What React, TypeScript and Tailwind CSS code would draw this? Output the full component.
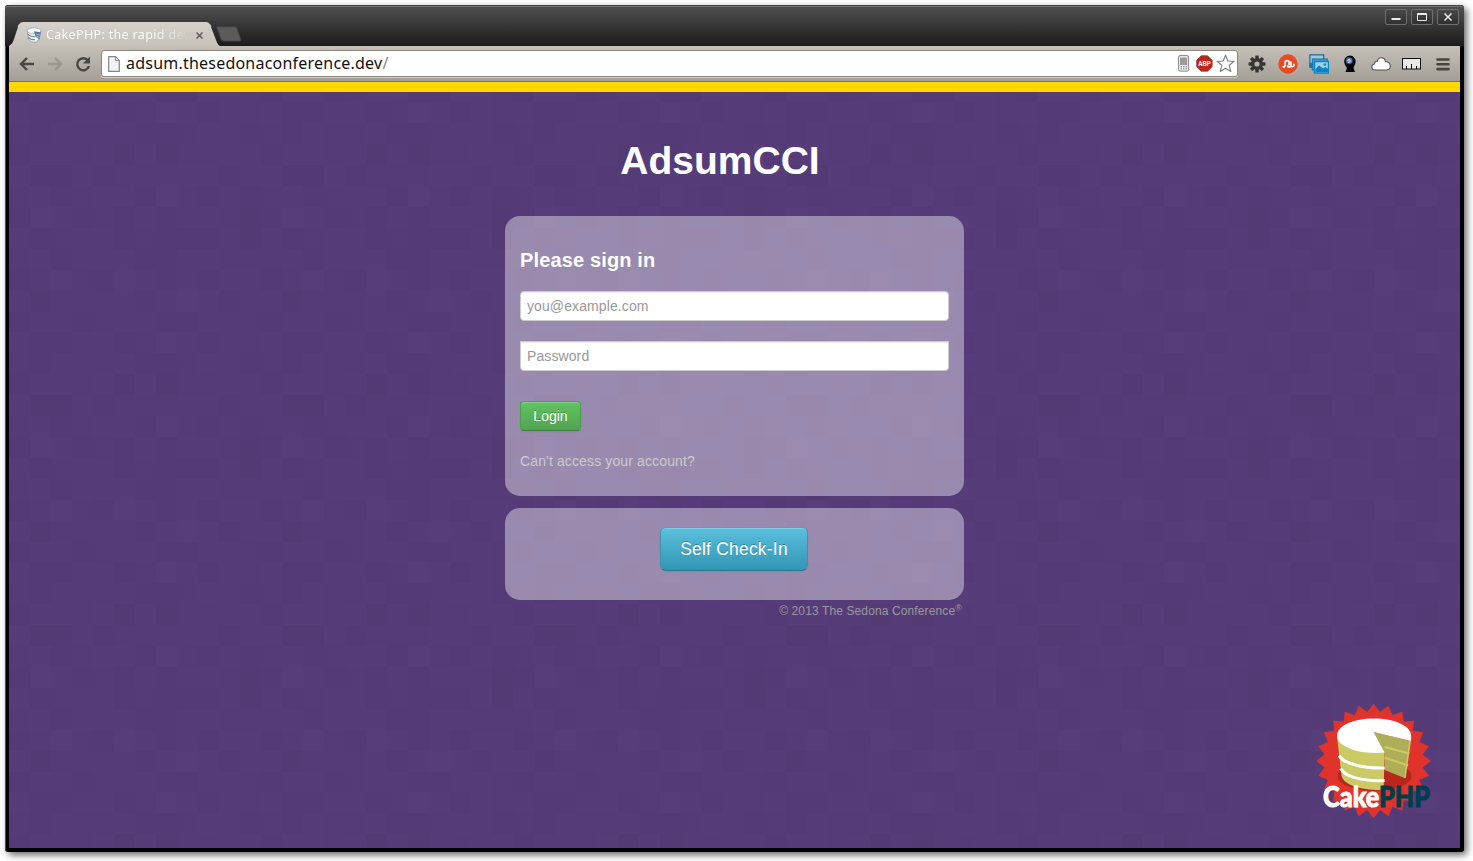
import React from "react";

const CELL = 21;

/* Brightness steps of the repeating mosaic: 12 columns by 11 rows. */
const MOSAIC: number[][] = [
  [1, -1, -1, 1, 1, -1, 0, 2, 1, -1, 1, 0],
  [0, -1, 1, 0, 0, 1, -1, -1, 0, 1, 1, -1],
  [-1, 1, 1, 0, 1, -2, 1, -2, 0, 0, 1, 1],
  [1, -2, -2, 1, -1, 0, 0, 0, 1, 1, -1, 1],
  [0, 1, -1, 0, 1, 1, -1, 2, 0, -1, 1, -1],
  [-1, 2, 1, -1, 0, -1, 1, -1, 1, 1, 0, -2],
  [1, -1, 0, 1, 1, -1, 0, -1, -1, -1, 1, -2],
  [0, 1, -1, 1, 1, 1, -1, -1, 1, 1, 0, 0],
  [-1, 0, 2, 0, -1, 2, 1, -1, 1, -1, 1, 1],
  [1, -2, 0, 0, 0, 1, -1, 1, 2, 1, -1, 1],
  [-1, 1, 1, -1, 0, 1, 1, -1, -1, 1, 1, 0],
];

const SHADES: Record<string, string> = {
  "-2": "#533a75",
  "-1": "#543b77",
  "0": "#553c79",
  "1": "#563d7a",
  "2": "#573e7b",
};

function Mosaic() {
  return (
    <svg className="absolute inset-0 h-full w-full" aria-hidden="true">
      <defs>
        <pattern id="mosaic" x="0" y="20" width={CELL * 12} height={CELL * 11 - 1} patternUnits="userSpaceOnUse">
          <rect width={CELL * 12} height={CELL * 11} fill="#553c79" />
          {MOSAIC.map((row, r) =>
            row.map((v, c) => (
              <rect key={`${r}-${c}`} x={c * CELL} y={r * CELL} width={CELL} height={CELL} fill={SHADES[String(v)]} />
            )),
          )}
        </pattern>
      </defs>
      <rect width="100%" height="100%" fill="url(#mosaic)" />
    </svg>
  );
}

function Tab() {
  return (
    <div className="relative ml-[3px] flex h-6 w-[213px] items-center pl-[18px]">
      <svg className="absolute inset-0" width="213" height="24" viewBox="0 0 213 24" aria-hidden="true">
        <defs>
          <linearGradient id="tab" x1="0" y1="0" x2="0" y2="1">
            <stop offset="0" stopColor="#d6d2cb" />
            <stop offset="1" stopColor="#c6c1b9" />
          </linearGradient>
        </defs>
        <path d="M1 24C4 22 5 20 6 17L10 5C11 2 12 .5 16 .5H197C201 .5 202 2 203 5L208 18C209 21 210 23 212 24Z" fill="url(#tab)" />
        <path d="M10 5C11 2 12 .5 16 .5H197C201 .5 202 2 203 5" fill="none" stroke="#e6e3de" strokeWidth=".8" />
      </svg>
      <svg className="relative mt-[1px]" width="16" height="16" viewBox="0 0 16 16" aria-hidden="true">
        <path d="M1.200 4 2.500 12c.8 2.400 4 3.500 8 3.200L12 13l1.300-.8L15 4z" fill="#f0f3f6" stroke="#8795a6" strokeWidth=".7" />
        <path d="M1.700 7c1.500 2 4 2.700 7.300 2.700M2.300 10.300c1.500 1.700 4 2.400 6.700 2.400" stroke="#6f8299" fill="none" strokeWidth="1.100" />
        <ellipse cx="8" cy="3.800" rx="7" ry="2.900" fill="#f9fafb" stroke="#98a4b2" strokeWidth=".7" />
        <path d="M8 4.300 14.800 5.300 13.300 12.500 9.500 9.500z" fill="#5878a2" />
        <path d="M10.500 7.300l3.500.7M10.500 9.500l3 .8" stroke="#c9d6e6" strokeWidth=".8" />
      </svg>
      <span className="relative ml-[4px] mt-[2px] w-[144px] overflow-hidden whitespace-nowrap bg-gradient-to-r from-white from-75% to-transparent to-100% bg-clip-text font-['Noto_Sans',sans-serif] text-[12.5px] leading-[20px] tracking-[0.34px] text-transparent">
        CakePHP: the rapid dev
      </span>
      <svg className="relative ml-[5px] mt-[2px]" width="9" height="9" viewBox="0 0 9 9" aria-hidden="true">
        <path d="M1.500 1.500 7.500 7.500M7.500 1.500 1.500 7.500" stroke="#5e5b57" strokeWidth="1.500" />
      </svg>
    </div>
  );
}

function WindowButton({ children }: { children: React.ReactNode }) {
  return (
    <div className="flex h-[16px] w-[22px] items-center justify-center rounded-[2px] border border-[#6e6e6e] bg-gradient-to-b from-[#484848] to-[#303030]">
      <svg width="14" height="14" viewBox="0 0 14 14" fill="none" stroke="#ececec" aria-hidden="true">
        {children}
      </svg>
    </div>
  );
}

function TitleBar() {
  return (
    <div className="flex h-[41px] justify-between rounded-t-[3px] border-t border-[#414141] bg-gradient-to-b from-[#505050] to-[#1c1c1c] shadow-[inset_0_1px_0_#757575]">
      <div className="flex items-end">
        <Tab />
        <svg className="-ml-[5px] mb-[4px]" width="26" height="16" viewBox="0 0 26 16" aria-hidden="true">
          <path d="M1.500.8H18.500C20 .8 20.500 1.500 21 2.500L24.500 13C25 14.500 24.500 15 23.500 15H8C6.500 15 5.500 14.500 5 13L1 2C.7 1.200 1 .8 1.500.8Z" fill="#5b5b5b" stroke="#454545" strokeWidth=".8" />
        </svg>
      </div>
      <div className="mr-[5px] mt-[3px] flex gap-[4px]">
        <WindowButton><path d="M2.500 9h9" strokeWidth="2" /></WindowButton>
        <WindowButton><path d="M2.500 3.500h9v7h-9zM2.500 4.500h9" /></WindowButton>
        <WindowButton><path d="M3.500 3.500l7 7M10.500 3.500l-7 7" strokeWidth="1.500" /></WindowButton>
      </div>
    </div>
  );
}

function Slot({ children }: { children: React.ReactNode }) {
  return <div className="flex w-[31px] shrink-0 items-center justify-center">{children}</div>;
}

function NavIcon({ children, color }: { children: React.ReactNode; color: string }) {
  return (
    <div className="flex w-7 shrink-0 items-center justify-center">
      <svg className={color} width="18" height="18" viewBox="0 0 18 18" fill="none" stroke="currentColor" strokeWidth="2.400" aria-hidden="true">
        {children}
      </svg>
    </div>
  );
}

function AddressBar() {
  return (
    <div className="flex h-[27px] w-[1137px] shrink-0 items-center rounded-[3px] border border-[#8b867e] bg-white shadow-[0_1px_0_#d2cec7]">
      <svg className="ml-[6px]" width="12" height="16" viewBox="0 0 12 16" aria-hidden="true">
        <path d="M.7.7H7.500L11.300 4.500V15.300H.7Z" fill="#f3f3f3" stroke="#858585" strokeWidth="1.200" />
        <path d="M7.300.9V4.700H11" fill="#fff" stroke="#858585" />
      </svg>
      <span className="mb-px ml-[6px] flex-1 whitespace-nowrap font-['Noto_Sans',sans-serif] text-[16px] leading-[24px] tracking-[0.22px] text-[#111]">
        adsum.thesedonaconference.dev<span className="text-[#888]">/</span>
      </span>
      <svg width="12" height="17" viewBox="0 0 12 17" aria-hidden="true">
        <rect x=".6" y=".6" width="10" height="15.500" rx="1.500" fill="#f1f1f1" stroke="#858585" />
        <rect x="2" y="2.500" width="7.200" height="7.500" fill="#9a9a9a" />
        <path d="M2.500 11.800h1.500M5 11.800h1.500M7.500 11.800H9M2.500 13.800h1.500M5 13.800h1.500M7.500 13.800H9" stroke="#777" />
      </svg>
      <svg className="ml-[6px]" width="17" height="17" viewBox="0 0 17 17" aria-hidden="true">
        <path d="M5.200.8h6.400l4.500 4.500v6.400l-4.500 4.500H5.200L.7 11.700V5.300z" fill="#c5221a" stroke="#8e3a34" strokeWidth=".8" />
        <text x="8.400" y="11.300" textAnchor="middle" fill="#fff" fontFamily="Liberation Sans, sans-serif" fontWeight="700" fontSize="7.500" textLength="12.500" lengthAdjust="spacingAndGlyphs">ABP</text>
      </svg>
      <svg className="ml-[3px] mr-[2px]" width="19" height="19" viewBox="0 0 19 19" aria-hidden="true">
        <path d="M9.500 1.200 11.800 7 18 7.400 13.200 11.300 14.800 17.500 9.500 14.200 4.200 17.500 5.800 11.300 1 7.400 7.200 7Z" fill="#fff" stroke="#7d7d7d" strokeWidth="1.100" strokeLinejoin="round" />
      </svg>
    </div>
  );
}

function Toolbar() {
  return (
    <div className="flex h-[36px] items-center border-b border-[#77736c] bg-gradient-to-b from-[#c5c0b8] to-[#a39e96] pl-[4px]">
      <div className="mr-[4px] flex">
        <NavIcon color="text-[#484744]"><path d="M16 9H3.500M9 3 3 9l6 6" /></NavIcon>
        <NavIcon color="text-[#9b978f]"><path d="M2 9h12.500M9 3l6 6-6 6" /></NavIcon>
        <NavIcon color="text-[#484744]">
          <path d="M14 5.500A6 6 0 1 0 15 11" />
          <path d="M16 1.500V8.500H9Z" fill="currentColor" stroke="none" />
        </NavIcon>
      </div>
      <AddressBar />
      <div className="flex pl-[3px]">
        <Slot>
          <svg width="18" height="18" viewBox="0 0 18 18" aria-hidden="true">
            <g fill="#353535">
              {[0, 45, 90, 135].map((a) => (
                <rect key={a} x="7.300" y=".6" width="3.400" height="16.800" rx=".6" transform={`rotate(${a} 9 9)`} />
              ))}
              <circle cx="9" cy="9" r="6" />
            </g>
            <circle cx="9" cy="9" r="2.600" fill="#b5b0a8" />
          </svg>
        </Slot>
        <Slot>
          <svg width="20" height="20" viewBox="0 0 20 20" aria-hidden="true">
            <circle cx="10" cy="10" r="9.700" fill="#eb4924" />
            <path d="M4.500 12.900h.9a1.700 1.700 0 0 0 1.700-1.700V8.700a2 2 0 0 1 4 0v2.500M10.300 9.500M12.900 7.500v3.700a1.700 1.700 0 0 1-3.400 0M12.900 11.200a1.500 1.500 0 0 0 3 0V9.800" stroke="#fff" strokeWidth="1.700" fill="none" />
          </svg>
        </Slot>
        <Slot>
          <svg width="20" height="20" viewBox="0 0 20 20" aria-hidden="true">
            <rect x=".8" y=".8" width="14" height="12.500" fill="#2375ac" stroke="#176aa4" />
            <path d="M1.500 1.500h12.500v3L1.500 9z" fill="#9fc9df" />
            <rect x="3.300" y="5" width="15" height="11" fill="#4e9fce" stroke="#1370aa" />
            <rect x="5.500" y="7.500" width="14" height="11.500" fill="#9dd0ea" stroke="#0784c8" strokeWidth="1.500" />
            <path d="M6.500 15 10 11.500l4 3 2.500-1.500 2.500 2V18H6.500z" fill="#0d7fc0" />
            <circle cx="15.800" cy="10.600" r="1.400" fill="#178dcb" />
          </svg>
        </Slot>
        <Slot>
          <svg width="14" height="18" viewBox="0 0 14 18" aria-hidden="true">
            <path d="M7 .5a5.700 5.700 0 0 1 5.500 7c-.5 2.500-1.500 3.500-2 5.500l1.500 4H2.500L4 13C2.500 11 1.200 9 1.200 6A5.700 5.700 0 0 1 7 .5z" fill="#050505" />
            <circle cx="6.200" cy="5.800" r="3.300" fill="#6d82c5" stroke="#26366d" strokeWidth=".7" />
            <path d="M4.500 5.500l2-1.300 1 2.300M5 7.500l2-.8" stroke="#dbe2fa" fill="none" strokeWidth=".9" />
          </svg>
        </Slot>
        <Slot>
          <svg width="20" height="14" viewBox="0 0 20 14" aria-hidden="true">
            <path d="M4 13C2 13 .8 11.800.8 10c0-1.800 1.100-2.800 2.600-3C3.400 4.800 4.800 4 6.200 4.300 6.800 2 8.400.8 10.200.8c2.400 0 4 1.600 4.300 4 2.700-.2 4.800 1.700 4.800 4.300 0 2.400-1.600 3.900-3.900 3.900z" fill="#fff" stroke="#555" strokeWidth="1.100" />
          </svg>
        </Slot>
        <Slot>
          <svg width="19" height="12" viewBox="0 0 19 12" aria-hidden="true">
            <rect x=".5" y=".5" width="18" height="10.500" fill="#e9e9e9" stroke="#111" />
            <path d="M4.500 11V8M9.500 11V6M14.500 11V8" stroke="#111" />
          </svg>
        </Slot>
        <Slot>
          <svg width="14" height="14" viewBox="0 0 14 14" aria-hidden="true">
            <path d="M1.500 2.500h11M1.500 7.300h11M1.500 12.100h11" stroke="#464541" strokeWidth="2.600" strokeLinecap="round" />
          </svg>
        </Slot>
      </div>
    </div>
  );
}

const SEAL = Array.from({ length: 48 }, (_, i) => {
  const radius = i % 2 === 0 ? 57.3 : 49.5;
  const angle = (i * Math.PI) / 24;
  return `${(58 + radius * Math.sin(angle)).toFixed(2)},${(58 - radius * Math.cos(angle)).toFixed(2)}`;
}).join(" ");

function CakeLogo() {
  return (
    <svg className="absolute bottom-[28px] right-[28px] overflow-visible" width="117" height="117" viewBox="-0.6 0 117 117" role="img" aria-label="CakePHP">
      <polygon points={SEAL} fill="#e0332b" />
      <ellipse cx="59" cy="73" rx="37" ry="15" fill="#b9261c" />
      <path d="M21.500 34 26 73C28 82 45 87.500 68 87L69 49Z" fill="#cbcb66" />
      <path d="M58 29 95 38 89 75 69 67V50Z" fill="#afae58" />
      <path d="M69 54.500 92.500 62.500M69 44 93.800 50.500" stroke="#cbcb66" strokeWidth="2" />
      <path d="M94.500 38 89.300 75" stroke="#cbcb66" strokeWidth="1.600" />
      <path d="M58 29 69 49.500C45 52 21.500 44 21.500 33 21.500 22.500 38 15.500 58.500 15.500S95.500 23 95.500 32.500V38Z" fill="#fff" />
      <path d="M23.500 52.500C27 60 46 65.500 69 65M25 65.500C29 73.500 46 78.500 69 77.500" fill="none" stroke="#fff" strokeWidth="3" />
      <text x="7.500" y="103.500" fill="#fff" stroke="#fff" strokeWidth=".9" fontFamily="Lato, sans-serif" fontWeight="900" fontSize="27.500" textLength="107" lengthAdjust="spacingAndGlyphs">
        Cake<tspan fill="#003d4c" stroke="#003d4c">PHP</tspan>
      </text>
    </svg>
  );
}

const inputClass =
  "block h-[30px] w-full border border-[#ccc] bg-white px-[6px] text-[14px] leading-5 tracking-[0.1px] text-[#555] shadow-[inset_0_1px_1px_rgba(0,0,0,0.075)] outline-none placeholder:text-[#999] placeholder:opacity-100";

function LoginPage() {
  return (
    <div className="relative flex-1 bg-[#553c79]">
      <Mosaic />
      <div className="relative h-[10px] bg-[#ffd700]" />
      <main className="relative ml-[496px] flex w-[459px] flex-col">
        <h1 className="mt-[49px] pr-[29px] text-center text-[39px] font-bold leading-10 text-white">AdsumCCI</h1>
        <form className="mt-[35px] h-[280px] rounded-[15px] bg-white/40 px-[15px] pt-[24px]" onSubmit={(e) => e.preventDefault()}>
          <h2 className="text-[20px] font-bold leading-10 tracking-[0.14px] text-white">Please sign in</h2>
          <input className={`${inputClass} mt-[11px] rounded-[4px]`} type="email" placeholder="you@example.com" />
          <input className={`${inputClass} mt-[20px] rounded-b-[4px]`} type="password" placeholder="Password" />
          <button className="mt-[30px] block h-[30px] w-[61px] rounded-[4px] border border-x-[#4c9f4c] border-b-[#3b823b] border-t-[#4c9f4c] bg-gradient-to-b from-[#62c462] to-[#51a351] text-[14px] leading-5 text-white shadow-[inset_0_1px_0_rgba(255,255,255,0.2),0_1px_2px_rgba(0,0,0,0.05)] [text-shadow:0_-1px_0_rgba(0,0,0,0.25)]">
            Login
          </button>
          <a className="mt-[20px] block text-[14px] leading-5 tracking-[0.13px] text-[#ccc]" href="#account">Can't access your account?</a>
        </form>
        <section className="mt-[12px] flex h-[92px] items-start justify-center rounded-[15px] bg-white/40 pr-[1px] pt-[19px]">
          <button className="h-[44px] w-[148px] rounded-[6px] border border-x-[#3a95b0] border-b-[#267890] border-t-[#4aa7c2] bg-gradient-to-b from-[#5bc0de] to-[#2f96b4] text-[17.5px] leading-5 tracking-[0.2px] text-white shadow-[inset_0_1px_0_rgba(255,255,255,0.2),0_1px_2px_rgba(0,0,0,0.05)] [text-shadow:0_-1px_0_rgba(0,0,0,0.25)]">
            Self Check-In
          </button>
        </section>
        <footer className="mt-px pr-[2px] text-right text-[12px] leading-[20px] tracking-[0.12px] text-[#999]">
          © 2013 The Sedona Conference<sup className="relative -top-[0.5em] align-baseline text-[9px] leading-none">®</sup>
        </footer>
      </main>
      <CakeLogo />
    </div>
  );
}

export default function App() {
  return (
    <div className="h-[861px] w-[1473px] overflow-hidden bg-white pl-[5px] pt-[5px] font-['Liberation_Sans',Arial,sans-serif]">
      <div className="flex h-[847px] w-[1459px] flex-col rounded-[4px] bg-black shadow-[3px_3px_7px_rgba(0,0,0,0.6)]">
        <TitleBar />
        <div className="flex flex-1 flex-col rounded-b-[3px] border-l border-l-[#4b4b4b] bg-black pb-[4px] pl-[3px] pr-[4px]">
          <Toolbar />
          <LoginPage />
        </div>
      </div>
    </div>
  );
}
